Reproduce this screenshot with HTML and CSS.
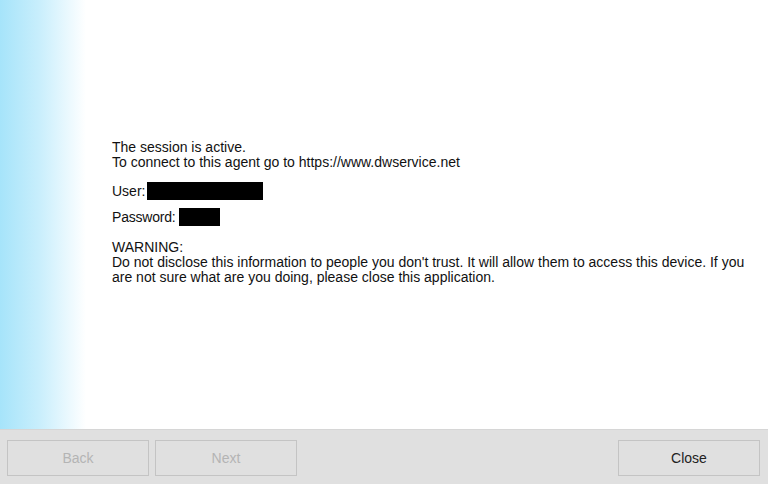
FILE: index.html
```html
<!DOCTYPE html>
<html>
<head>
<meta charset="utf-8">
<link rel="stylesheet" href="styles.css">
</head>
<body>
<div class="app">
  <div class="main">
    <div class="side"></div>
    <div class="content">
      <div class="block">
        <div class="line">The session is active.</div>
        <div class="line">To connect to this agent go to https://www.dwservice.net</div>
      </div>
      <div class="row user"><span>User:</span><span class="mask mask-user"></span></div>
      <div class="row pass"><span>Password:</span><span class="mask mask-pass"></span></div>
      <div class="block warn">
        <div class="line">WARNING:</div>
        <div class="line">Do not disclose this information to people you don't trust. It will allow them to access this device. If you are not sure what are you doing, please close this application.</div>
      </div>
    </div>
  </div>
  <div class="footer">
    <button class="btn" disabled>Back</button>
    <button class="btn" disabled>Next</button>
    <div class="spacer"></div>
    <button class="btn primary">Close</button>
  </div>
</div>
</body>
</html>
```
FILE: styles.css
```css
html, body { margin: 0; padding: 0; }
body {
  width: 768px; height: 484px; overflow: hidden;
  font-family: "Liberation Sans", Arial, sans-serif;
  font-size: 14px; color: #111;
  background: #fff;
}
.app { display: flex; flex-direction: column; height: 484px; }
.main { flex: 1; display: flex; background: #fff; }
.side {
  width: 86px; flex: none;
  background: linear-gradient(to right, #a6e4fa 0%, #c8eefc 45%, #ffffff 100%);
}
.content {
  flex: 1;
  padding: 140px 16px 0 26px;
  line-height: 15px;
}
.row { display: flex; align-items: center; height: 18px; }
.user { margin-top: 12px; gap: 2px; }
.pass { margin-top: 8px; gap: 3px; }
.pass span:first-child { letter-spacing: -0.2px; }
.mask { display: inline-block; background: #000; height: 18px; }
.mask-user { width: 116px; }
.mask-pass { width: 41px; }
.warn { margin-top: 14px; }
.footer {
  height: 55px; flex: none;
  background: #e0e0e0;
  border-top: 1px solid #d6d6d6;
  display: flex; align-items: center;
  padding: 0 8px 0 7px; gap: 6px;
  box-sizing: border-box;
}
.spacer { flex: 1; }
.btn {
  width: 142px; height: 36px;
  background: #e0e0e0;
  border: 1px solid #c4c4c4;
  font-family: "Liberation Sans", Arial, sans-serif;
  font-size: 14px; color: #222;
  padding: 0;
  margin-top: 2px;
}
.btn:disabled { color: #b4b4b4; }
```
